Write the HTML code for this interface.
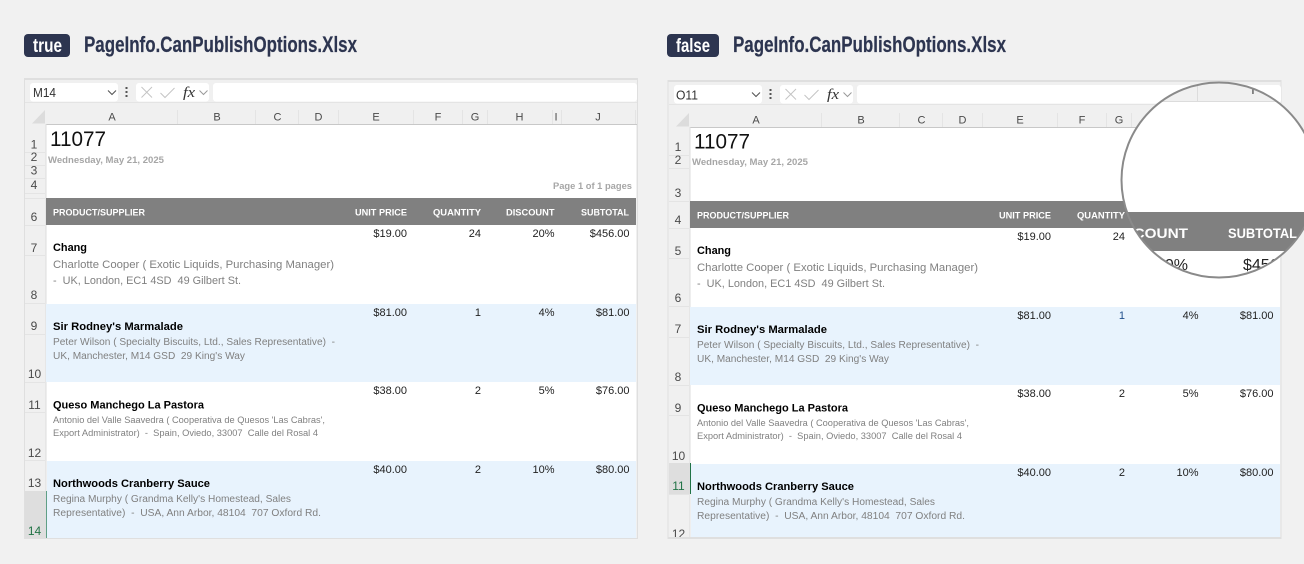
<!DOCTYPE html>
<html lang="en">
<head>
<meta charset="utf-8">
<title>PageInfo.CanPublishOptions.Xlsx</title>
<style>
html,body{margin:0;padding:0;background:#f1f1f1;width:1304px;height:564px;overflow:hidden}
svg{display:block}
text{font-family:"Liberation Sans",sans-serif;white-space:pre}
.ttl{font-size:22px;font-weight:700;fill:#2d3550;stroke:#2d3550;stroke-width:.2px}
.bdg{font-size:19px;font-weight:700;fill:#fff}
.nm{font-size:12.5px;fill:#333}
.col{font-size:11px;fill:#4a4a4a;text-anchor:middle}
.row{font-size:12px;fill:#4a4a4a;text-anchor:middle}
.big{font-size:21px;fill:#111}
.sm{font-size:9.5px;font-weight:700;fill:#a6a6a6}
.hd{font-size:9px;font-weight:700;fill:#fff}
.v{font-size:11px;fill:#222;text-anchor:end}
.b{font-size:11px;font-weight:700;fill:#000}
.g1{font-size:11px;fill:#808080}
.g2{font-size:10px;fill:#808080}
.g3{font-size:9px;fill:#808080}
.ln{stroke:#e4e4e4;stroke-width:1;fill:none}
.ic{stroke:#c4c4c4;stroke-width:1;fill:none}
.ch{stroke:#555;stroke-width:1.1;fill:none}
</style>
</head>
<body>
<svg width="1304" height="564" viewBox="0 0 1304 564" xmlns="http://www.w3.org/2000/svg">
<defs>
<clipPath id="mag"><circle cx="1219" cy="180" r="97.5"/></clipPath>
<clipPath id="rclip"><rect x="668" y="80" width="613" height="457"/></clipPath>
</defs>
<rect width="1304" height="564" fill="#f1f1f1"/>

<!-- LEFT -->
<rect x="24" y="34" width="46" height="23" rx="4" fill="#2d3550"/>
<text class="bdg" x="33" y="52" textLength="29" lengthAdjust="spacingAndGlyphs">true</text>
<text class="ttl" x="84" y="52" textLength="273" lengthAdjust="spacingAndGlyphs">PageInfo.CanPublishOptions.Xlsx</text>

<rect x="24" y="78" width="614" height="461" fill="#dfdfdf"/>
<rect x="25" y="80" width="612" height="458" fill="#f0f0f0"/>
<rect x="30" y="83" width="88" height="18.500" rx="3" fill="#fff"/>
<text class="nm" x="33" y="97" textLength="23" lengthAdjust="spacingAndGlyphs">M14</text>
<path class="ch" d="M108 90.500l4 4 4-4"/>
<rect x="125.500" y="87" width="2" height="2" fill="#555"/><rect x="125.500" y="91" width="2" height="2" fill="#555"/><rect x="125.500" y="95" width="2" height="2" fill="#555"/>
<rect x="136" y="83" width="73" height="18.500" rx="3" fill="#fff"/>
<path class="ic" d="M141.500 87l10.500 10.500M152 87l-10.500 10.500"/>
<path class="ic" d="M160.500 93l4.500 4.500 9.500-9.500"/>
<text x="183" y="97" style="font-family:'Liberation Serif',serif;font-size:15px;font-style:italic;fill:#333" textLength="12" lengthAdjust="spacingAndGlyphs">fx</text>
<path class="ic" style="stroke:#9a9a9a" d="M199.500 90.500l4 4 4-4"/>
<rect x="213" y="83" width="424" height="18.500" rx="3" fill="#fff"/>
<path d="M25 102.500H637" class="ln"/>
<path d="M32 123.500L45 110V123.500Z" fill="#dcdcdc"/>
<path class="ln" d="M177.500 110v14M255.500 110v14M298.500 110v14M338.500 110v14M413.500 110v14M462.500 110v14M487.500 110v14M552.500 110v14M561.500 110v14M635.500 110v14"/>
<rect x="46" y="124" width="591" height="1" fill="#c8c8c8"/>
<rect x="46" y="125" width="590" height="413" fill="#fff"/>
<text class="col" x="112" y="120.500">A</text><text class="col" x="217" y="120.500">B</text><text class="col" x="277.500" y="120.500">C</text><text class="col" x="318.500" y="120.500">D</text><text class="col" x="376" y="120.500">E</text><text class="col" x="438" y="120.500">F</text><text class="col" x="475" y="120.500">G</text><text class="col" x="519.500" y="120.500">H</text><text class="col" x="556" y="120.500">I</text><text class="col" x="598" y="120.500">J</text>
<rect x="45.500" y="124" width="1" height="414" fill="#dcdcdc"/>
<path class="ln" d="M25 152.500h20M25 165.500h20M25 178.500h20M25 193.500h20M25 198.500h20M25 225.500h20M25 255.500h20M25 303.500h20M25 334.500h20M25 382.500h20M25 412.500h20M25 460.500h20M25 491.500h20"/>
<rect x="25" y="491" width="21" height="47" fill="#dedede"/>
<rect x="46" y="491" width="1" height="47" fill="#5f9f86"/>
<text class="row" x="34" y="148.500">1</text><text class="row" x="34" y="161">2</text><text class="row" x="34" y="174.500">3</text><text class="row" x="34" y="189">4</text><text class="row" x="34" y="221">6</text><text class="row" x="34" y="252">7</text><text class="row" x="34" y="299">8</text><text class="row" x="34" y="330">9</text><text class="row" x="34.500" y="378">10</text><text class="row" x="34.500" y="409">11</text><text class="row" x="34.500" y="457">12</text><text class="row" x="34.500" y="487">13</text><text class="row" x="34.500" y="535" style="fill:#217346">14</text>

<text class="big" x="50" y="146" textLength="56" lengthAdjust="spacingAndGlyphs">11077</text>
<text class="sm" x="48" y="163" textLength="116" lengthAdjust="spacingAndGlyphs">Wednesday, May 21, 2025</text>
<text class="sm" x="553" y="189" textLength="79" lengthAdjust="spacingAndGlyphs">Page 1 of 1 pages</text>
<rect x="46" y="198" width="590" height="27" fill="#808080"/>
<text class="hd" x="53" y="215.500" textLength="92" lengthAdjust="spacingAndGlyphs">PRODUCT/SUPPLIER</text>
<text class="hd" x="355" y="215.500" textLength="52" lengthAdjust="spacingAndGlyphs">UNIT PRICE</text>
<text class="hd" x="433" y="215.500" textLength="48" lengthAdjust="spacingAndGlyphs">QUANTITY</text>
<text class="hd" x="506" y="215.500" textLength="48.500" lengthAdjust="spacingAndGlyphs">DISCOUNT</text>
<text class="hd" x="581" y="215.500" textLength="48" lengthAdjust="spacingAndGlyphs">SUBTOTAL</text>
<rect x="46" y="304" width="590" height="78" fill="#e8f3fd"/>
<rect x="47" y="461" width="589" height="77" fill="#e8f3fd"/>
<text class="v" x="407" y="237">$19.00</text><text class="v" x="481" y="237">24</text><text class="v" x="554.500" y="237">20%</text><text class="v" x="629.500" y="237">$456.00</text>
<text class="b" x="53" y="251" textLength="34" lengthAdjust="spacingAndGlyphs">Chang</text>
<text class="g1" x="53" y="268" textLength="281" lengthAdjust="spacingAndGlyphs">Charlotte Cooper ( Exotic Liquids, Purchasing Manager)</text>
<text class="g1" x="53" y="284" textLength="188" lengthAdjust="spacingAndGlyphs">-  UK, London, EC1 4SD  49 Gilbert St.</text>
<text class="v" x="407" y="316">$81.00</text><text class="v" x="481" y="316">1</text><text class="v" x="554.500" y="316">4%</text><text class="v" x="629.500" y="316">$81.00</text>
<text class="b" x="53" y="330" textLength="130" lengthAdjust="spacingAndGlyphs">Sir Rodney's Marmalade</text>
<text class="g2" x="53" y="345" textLength="282" lengthAdjust="spacingAndGlyphs">Peter Wilson ( Specialty Biscuits, Ltd., Sales Representative)  -</text>
<text class="g2" x="53" y="359" textLength="192" lengthAdjust="spacingAndGlyphs">UK, Manchester, M14 GSD  29 King's Way</text>
<text class="v" x="407" y="394">$38.00</text><text class="v" x="481" y="394">2</text><text class="v" x="554.500" y="394">5%</text><text class="v" x="629.500" y="394">$76.00</text>
<text class="b" x="53" y="408.500" textLength="151" lengthAdjust="spacingAndGlyphs">Queso Manchego La Pastora</text>
<text class="g3" x="53" y="423" textLength="272" lengthAdjust="spacingAndGlyphs">Antonio del Valle Saavedra ( Cooperativa de Quesos 'Las Cabras',</text>
<text class="g3" x="53" y="436" textLength="265" lengthAdjust="spacingAndGlyphs">Export Administrator)  -  Spain, Oviedo, 33007  Calle del Rosal 4</text>
<text class="v" x="407" y="473">$40.00</text><text class="v" x="481" y="473">2</text><text class="v" x="554.500" y="473">10%</text><text class="v" x="629.500" y="473">$80.00</text>
<text class="b" x="53" y="487" textLength="157" lengthAdjust="spacingAndGlyphs">Northwoods Cranberry Sauce</text>
<text class="g2" x="53" y="502" textLength="238" lengthAdjust="spacingAndGlyphs">Regina Murphy ( Grandma Kelly's Homestead, Sales</text>
<text class="g2" x="53" y="516" textLength="268" lengthAdjust="spacingAndGlyphs">Representative)  -  USA, Ann Arbor, 48104  707 Oxford Rd.</text>

<!-- RIGHT -->
<rect x="667" y="34" width="52" height="23" rx="4" fill="#2d3550"/>
<text class="bdg" x="676" y="52" textLength="34" lengthAdjust="spacingAndGlyphs">false</text>
<text class="ttl" x="733" y="52" textLength="273" lengthAdjust="spacingAndGlyphs">PageInfo.CanPublishOptions.Xlsx</text>

<rect x="667.500" y="80" width="614" height="459" fill="#dfdfdf"/>
<rect x="668.500" y="82" width="612" height="455" fill="#f0f0f0"/>
<g transform="translate(644,2)">
<rect x="30" y="83" width="88" height="18.500" rx="3" fill="#fff"/>
<text class="nm" x="32" y="97.500" textLength="22" lengthAdjust="spacingAndGlyphs">O11</text>
<path class="ch" d="M108 90.500l4 4 4-4"/>
<rect x="125.500" y="87" width="2" height="2" fill="#555"/><rect x="125.500" y="91" width="2" height="2" fill="#555"/><rect x="125.500" y="95" width="2" height="2" fill="#555"/>
<rect x="136" y="83" width="73" height="18.500" rx="3" fill="#fff"/>
<path class="ic" d="M141.500 87l10.500 10.500M152 87l-10.500 10.500"/>
<path class="ic" d="M160.500 93l4.500 4.500 9.500-9.500"/>
<text x="183" y="97" style="font-family:'Liberation Serif',serif;font-size:15px;font-style:italic;fill:#333" textLength="12" lengthAdjust="spacingAndGlyphs">fx</text>
<path class="ic" style="stroke:#9a9a9a" d="M199.500 90.500l4 4 4-4"/>
<rect x="213" y="83" width="424" height="18.500" rx="3" fill="#fff"/>
<path d="M25 102.500H637" class="ln"/>
</g>
<g transform="translate(644,3)">
<path d="M32 123.500L45 110V123.500Z" fill="#dcdcdc"/>
<path class="ln" d="M177.500 110v14M255.500 110v14M298.500 110v14M338.500 110v14M413.500 110v14M462.500 110v14M487.500 110v14M552.500 110v14M561.500 110v14M635.500 110v14"/>
<rect x="46" y="124" width="591" height="1" fill="#c8c8c8"/>
<rect x="46" y="125" width="590" height="409" fill="#fff"/>
<text class="col" x="112" y="120.500">A</text><text class="col" x="217" y="120.500">B</text><text class="col" x="277.500" y="120.500">C</text><text class="col" x="318.500" y="120.500">D</text><text class="col" x="376" y="120.500">E</text><text class="col" x="438" y="120.500">F</text><text class="col" x="475" y="120.500">G</text>
<rect x="45.500" y="124" width="1" height="410" fill="#dcdcdc"/>
<path class="ln" d="M25 152.500h20M25 165.500h20M25 198.500h20M25 225.500h20M25 255.500h20M25 303.500h20M25 334.500h20M25 382.500h20M25 412.500h20M25 460.500h20M25 491.500h20"/>
<rect x="25" y="460" width="21" height="31" fill="#dedede"/>
<rect x="46" y="460" width="1" height="31" fill="#217346"/>
<text class="big" x="50" y="145.500" textLength="56" lengthAdjust="spacingAndGlyphs">11077</text>
<text class="sm" x="48" y="162" textLength="116" lengthAdjust="spacingAndGlyphs">Wednesday, May 21, 2025</text>
<rect x="46" y="198" width="590" height="27" fill="#808080"/>
<text class="hd" x="53" y="215.500" textLength="92" lengthAdjust="spacingAndGlyphs">PRODUCT/SUPPLIER</text>
<text class="hd" x="355" y="215.500" textLength="52" lengthAdjust="spacingAndGlyphs">UNIT PRICE</text>
<text class="hd" x="433" y="215.500" textLength="48" lengthAdjust="spacingAndGlyphs">QUANTITY</text>
<rect x="46" y="304" width="590" height="78" fill="#e8f3fd"/>
<rect x="47" y="461" width="589" height="73" fill="#e8f3fd"/>
<text class="v" x="407" y="237">$19.00</text><text class="v" x="481" y="237">24</text><text class="v" x="554.500" y="237">20%</text><text class="v" x="629.500" y="237">$456.00</text>
<text class="b" x="53" y="251" textLength="34" lengthAdjust="spacingAndGlyphs">Chang</text>
<text class="g1" x="53" y="268" textLength="281" lengthAdjust="spacingAndGlyphs">Charlotte Cooper ( Exotic Liquids, Purchasing Manager)</text>
<text class="g1" x="53" y="284" textLength="188" lengthAdjust="spacingAndGlyphs">-  UK, London, EC1 4SD  49 Gilbert St.</text>
<text class="v" x="407" y="316">$81.00</text><text class="v" x="481" y="316" style="fill:#1f4e8c">1</text><text class="v" x="554.500" y="316">4%</text><text class="v" x="629.500" y="316">$81.00</text>
<text class="b" x="53" y="330" textLength="130" lengthAdjust="spacingAndGlyphs">Sir Rodney's Marmalade</text>
<text class="g2" x="53" y="345" textLength="282" lengthAdjust="spacingAndGlyphs">Peter Wilson ( Specialty Biscuits, Ltd., Sales Representative)  -</text>
<text class="g2" x="53" y="359" textLength="192" lengthAdjust="spacingAndGlyphs">UK, Manchester, M14 GSD  29 King's Way</text>
<text class="v" x="407" y="394">$38.00</text><text class="v" x="481" y="394">2</text><text class="v" x="554.500" y="394">5%</text><text class="v" x="629.500" y="394">$76.00</text>
<text class="b" x="53" y="408.500" textLength="151" lengthAdjust="spacingAndGlyphs">Queso Manchego La Pastora</text>
<text class="g3" x="53" y="423" textLength="272" lengthAdjust="spacingAndGlyphs">Antonio del Valle Saavedra ( Cooperativa de Quesos 'Las Cabras',</text>
<text class="g3" x="53" y="436" textLength="265" lengthAdjust="spacingAndGlyphs">Export Administrator)  -  Spain, Oviedo, 33007  Calle del Rosal 4</text>
<text class="v" x="407" y="473">$40.00</text><text class="v" x="481" y="473">2</text><text class="v" x="554.500" y="473">10%</text><text class="v" x="629.500" y="473">$80.00</text>
<text class="b" x="53" y="487" textLength="157" lengthAdjust="spacingAndGlyphs">Northwoods Cranberry Sauce</text>
<text class="g2" x="53" y="502" textLength="238" lengthAdjust="spacingAndGlyphs">Regina Murphy ( Grandma Kelly's Homestead, Sales</text>
<text class="g2" x="53" y="516" textLength="268" lengthAdjust="spacingAndGlyphs">Representative)  -  USA, Ann Arbor, 48104  707 Oxford Rd.</text>
</g>
<g clip-path="url(#rclip)">
<text class="row" x="678" y="151">1</text><text class="row" x="678" y="164">2</text><text class="row" x="678" y="197">3</text><text class="row" x="678" y="224">4</text><text class="row" x="678" y="255">5</text><text class="row" x="678" y="302">6</text><text class="row" x="678" y="333">7</text><text class="row" x="678" y="381">8</text><text class="row" x="678" y="412">9</text><text class="row" x="678.500" y="460">10</text><text class="row" x="678.500" y="490" style="fill:#217346">11</text><text class="row" x="678.500" y="538">12</text>
</g>

<!-- MAGNIFIER -->
<g clip-path="url(#mag)">
<rect x="1110" y="70" width="194" height="220" fill="#fff"/>
<rect x="1110" y="70" width="194" height="31" fill="#f0f0f0"/>
<path d="M1110 101.500H1304" stroke="#dcdcdc"/>
<path d="M1197.500 84v17" stroke="#dcdcdc"/>
<text x="1253" y="94" style="font-size:14px;fill:#555;text-anchor:middle">I</text>
<rect x="1110" y="212" width="194" height="39" fill="#808080"/>
<text x="1188" y="238" style="font-size:14px;font-weight:700;fill:#fff;text-anchor:end" textLength="80" lengthAdjust="spacingAndGlyphs">DISCOUNT</text>
<text x="1297" y="238" style="font-size:14px;font-weight:700;fill:#fff;text-anchor:end" textLength="69" lengthAdjust="spacingAndGlyphs">SUBTOTAL</text>
<text x="1188" y="270" style="font-size:16px;fill:#222;text-anchor:end">20%</text>
<text x="1243" y="270" style="font-size:16px;fill:#222">$456.00</text>
</g>
<circle cx="1219" cy="180" r="97.500" fill="none" stroke="#8a8a8a" stroke-width="2"/>
</svg>
</body>
</html>
